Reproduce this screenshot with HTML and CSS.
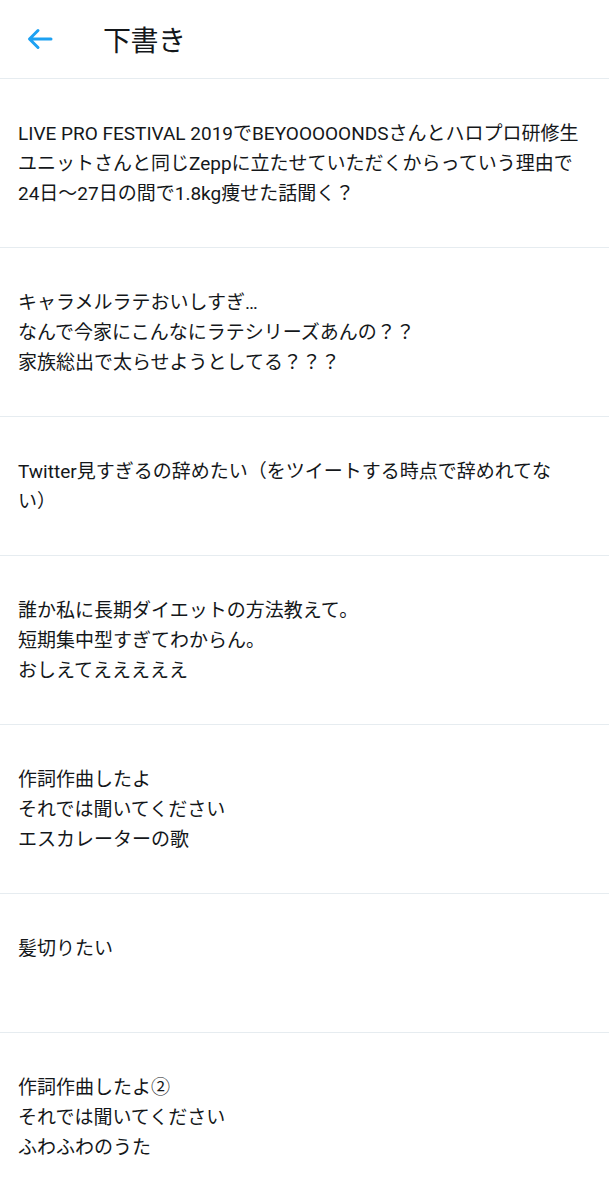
FILE: index.html
```html
<!DOCTYPE html>
<html lang="ja">
<head>
  <meta charset="UTF-8">
  <title>下書き</title>
  <link rel="stylesheet" href="styles.css">
</head>
<body>

  <header class="topbar">
    <svg class="back" width="26" height="22" viewBox="0 0 26 22">
      <path d="M24 11H3M11 2.5L2.5 11L11 19.5" fill="none" stroke="#1da1f2" stroke-width="3" stroke-linecap="round" stroke-linejoin="round"/>
    </svg>
    <h1>下書き</h1>
  </header>

  <ul class="drafts">
    <li>LIVE PRO FESTIVAL 2019でBEYOOOOONDSさんとハロプロ研修生<br>ユニットさんと同じZeppに立たせていただくからっていう理由で<br>24日〜27日の間で1.8kg痩せた話聞く？</li>
    <li>キャラメルラテおいしすぎ…<br>なんで今家にこんなにラテシリーズあんの？？<br>家族総出で太らせようとしてる？？？</li>
    <li>Twitter見すぎるの辞めたい（をツイートする時点で辞めれてな<br>い）</li>
    <li>誰か私に長期ダイエットの方法教えて。<br>短期集中型すぎてわからん。<br>おしえてえええええ</li>
    <li>作詞作曲したよ<br>それでは聞いてください<br>エスカレーターの歌</li>
    <li>髪切りたい</li>
    <li>作詞作曲したよ②<br>それでは聞いてください<br>ふわふわのうた</li>
  </ul>

</body>
</html>
```

FILE: styles.css
```css
body { margin: 0; background: #fff; color: #14171a; font-family: Roboto, "Noto Sans CJK JP", sans-serif; }
.topbar { display: flex; align-items: center; height: 78px; border-bottom: 1px solid #e6ecf0; }
.back { margin-left: 27px; }
.topbar h1 { margin: 0 0 0 50px; font-size: 28px; font-weight: 400; letter-spacing: -0.5px; }
.drafts { list-style: none; margin: 0; padding: 0; }
.drafts li { padding: 40px 18px 38px; min-height: 60px; font-size: 19px; line-height: 30px; white-space: nowrap; border-bottom: 1px solid #e6ecf0; }
```
